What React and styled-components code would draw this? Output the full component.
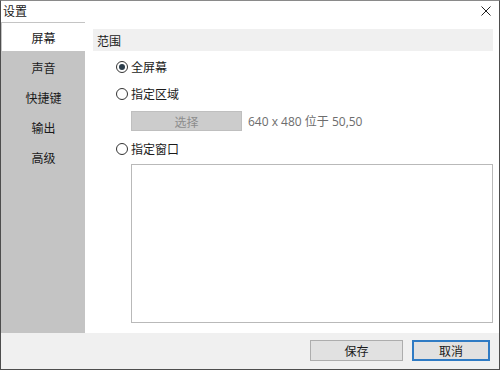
import React, { useState } from 'react';
import styled, { createGlobalStyle } from 'styled-components';

const GlobalStyle = createGlobalStyle`
  html, body {
    margin: 0;
    padding: 0;
    background: #ffffff;
  }
  * {
    box-sizing: border-box;
  }
`;

const tabs = ['屏幕', '声音', '快捷键', '输出', '高级'];

const App = () => {
  const [active, setActive] = useState(0);
  const [mode, setMode] = useState('full');

  return (
    <>
      <GlobalStyle />
      <Window>
        <TitleBar>
          <Title>设置</Title>
          <CloseIcon viewBox="0 0 10 10">
            <path d="M0.5 0.5 L9.5 9.5 M9.5 0.5 L0.5 9.5" />
          </CloseIcon>
        </TitleBar>
        <Body>
          <Sidebar>
            {tabs.map((t, idx) => (
              <Tab key={t} $active={idx === active} onClick={() => setActive(idx)}>
                {t}
              </Tab>
            ))}
          </Sidebar>
          <Content>
            <SectionHeader>范围</SectionHeader>
            <Options>
              <RadioRow onClick={() => setMode('full')}>
                <Radio $checked={mode === 'full'} />
                <Label>全屏幕</Label>
              </RadioRow>
              <RadioRow onClick={() => setMode('region')}>
                <Radio $checked={mode === 'region'} />
                <Label>指定区域</Label>
              </RadioRow>
              <RegionRow>
                <SelectButton>选择</SelectButton>
                <Info>640 x 480 位于 50,50</Info>
              </RegionRow>
              <RadioRow onClick={() => setMode('window')}>
                <Radio $checked={mode === 'window'} />
                <Label>指定窗口</Label>
              </RadioRow>
              <WindowList />
            </Options>
          </Content>
        </Body>
        <Footer>
          <Button $width={93}>保存</Button>
          <Button $width={78} $primary>取消</Button>
        </Footer>
      </Window>
    </>
  );
};

export default App;

const Window = styled.div`
  width: 500px;
  height: 370px;
  border: 1px solid #4d4d4d;
  border-top-color: #8a8a8a;
  display: flex;
  flex-direction: column;
  background: #ffffff;
  font-family: 'Noto Sans CJK SC', 'Noto Sans', sans-serif;
  font-size: 12px;
  color: #1a1a1a;
`;

const TitleBar = styled.div`
  height: 21px;
  display: flex;
  align-items: center;
  justify-content: space-between;
  padding: 0 8px 1px 2px;
`;

const Title = styled.span`
  font-size: 12px;
  line-height: 1;
`;

const CloseIcon = styled.svg`
  width: 10px;
  height: 10px;
  stroke: #222;
  stroke-width: 1;
  fill: none;
`;

const Body = styled.div`
  flex: 1;
  display: flex;
  min-height: 0;
`;

const Sidebar = styled.div`
  width: 84px;
  background: #c4c4c4;
  display: flex;
  flex-direction: column;
`;

const Tab = styled.div`
  height: 28px;
  margin: 1px 0 1px 1px;
  display: flex;
  align-items: center;
  justify-content: center;
  background: ${(p) => (p.$active ? '#ffffff' : 'transparent')};
  cursor: default;
`;

const Content = styled.div`
  flex: 1;
  padding: 7px 6px 10px 8px;
  display: flex;
  flex-direction: column;
`;

const SectionHeader = styled.div`
  height: 22px;
  background: #f0f0f0;
  display: flex;
  align-items: center;
  padding-left: 4px;
`;

const Options = styled.div`
  flex: 1;
  display: flex;
  flex-direction: column;
  padding-left: 23px;
  padding-top: 9px;
`;

const RadioRow = styled.div`
  height: 14px;
  display: flex;
  align-items: center;
  gap: 3px;
  margin: 0 0 13px;
  cursor: default;
`;

const Radio = styled.span`
  width: 12px;
  height: 12px;
  border-radius: 50%;
  border: 1px solid #333;
  background: #fff;
  position: relative;
  flex-shrink: 0;

  &::after {
    content: '';
    display: ${(p) => (p.$checked ? 'block' : 'none')};
    position: absolute;
    top: 2px;
    left: 2px;
    width: 6px;
    height: 6px;
    border-radius: 50%;
    background: #2c3e4c;
  }
`;

const Label = styled.span`
  line-height: 14px;
`;

const RegionRow = styled.div`
  display: flex;
  align-items: center;
  gap: 6px;
  margin: -3px 0 11px 15px;
`;

const SelectButton = styled.div`
  width: 111px;
  height: 20px;
  background: #cccccc;
  border: 1px solid #bfbfbf;
  color: #8c8c8c;
  display: flex;
  align-items: center;
  justify-content: center;
`;

const Info = styled.span`
  color: #6d6d6d;
  font-family: 'Open Sans', 'Noto Sans CJK SC', sans-serif;
`;

const WindowList = styled.div`
  flex: 1;
  margin: -5px 0 0 15px;
  border: 1px solid #b9b9b9;
  background: #fff;
`;

const Footer = styled.div`
  height: 36px;
  background: #f0f0f0;
  display: flex;
  align-items: center;
  justify-content: flex-end;
  gap: 9px;
  padding: 0 9px 1px 0;
`;

const Button = styled.div`
  width: ${(p) => p.$width}px;
  height: 21px;
  background: #e1e1e1;
  border: ${(p) => (p.$primary ? '2px solid #2f7bc4' : '1px solid #adadad')};
  display: flex;
  align-items: center;
  justify-content: center;
  color: #1a1a1a;
`;
